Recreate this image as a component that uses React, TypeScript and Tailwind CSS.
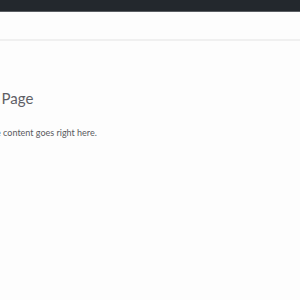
export default function App() {
  return (
    <div className="h-[300px] w-[300px] overflow-hidden bg-[#fdfdfd] font-['Lato',sans-serif]">
      <div className="h-[12px] border-b border-[#5a5e63] bg-[#23282d]" />
      <header className="h-[29px] border-b-2 border-[#f0f0f0] bg-[#fdfdfd]" />
      <main className="-ml-[50px] pt-[48px]">
        <h1 className="text-[15px] leading-[18px] text-[#5f5f66]">Sample Page</h1>
        <p className="mt-[20px] pl-[1px] text-[9px] leading-[12px] text-[#5a5a60]">
          Sample page content goes right here.
        </p>
      </main>
    </div>
  );
}
